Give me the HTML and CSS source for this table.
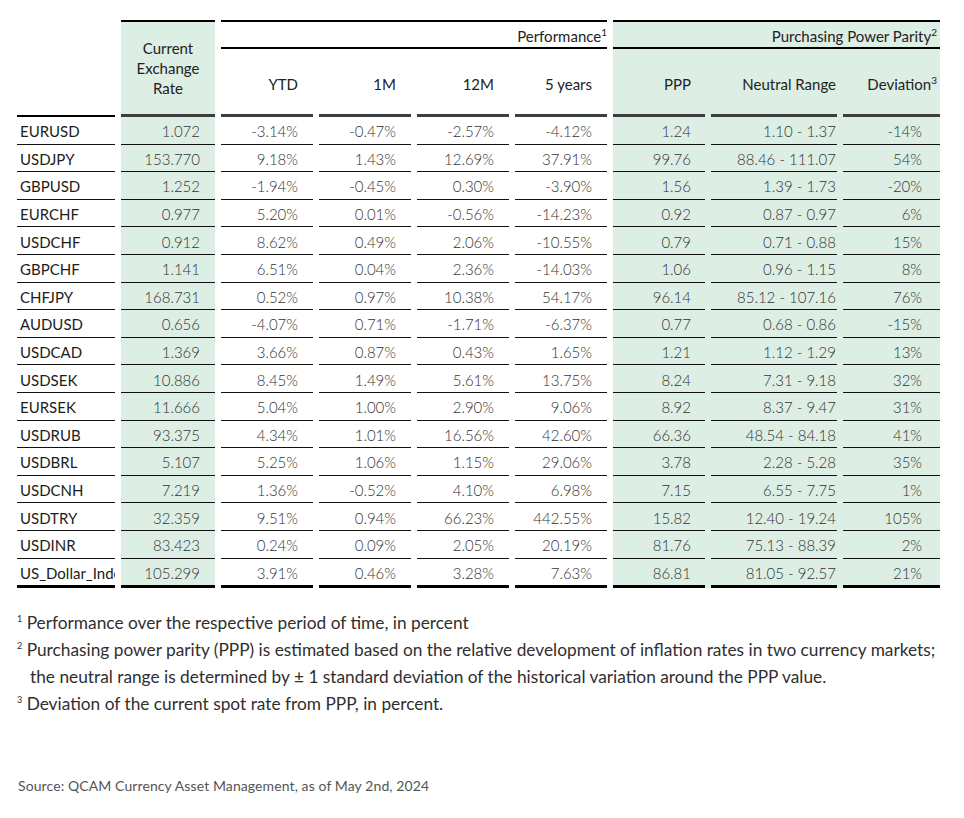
FILE: index.html
```html
<!DOCTYPE html>
<html lang="en">

<head>
    <meta charset="UTF-8">
    <meta name="viewport" content="width=device-width, initial-scale=1.0">
    <title>Currency overview</title>
    <link rel="stylesheet" href="styles.css">
</head>

<body>
    <table class="fx">
        <colgroup>
            <col style="width: 98px">
            <col style="width: 94px">
            <col style="width: 92px">
            <col style="width: 92px">
            <col style="width: 92px">
            <col style="width: 92px">
            <col style="width: 92px">
            <col style="width: 126px">
            <col style="width: 97px">
        </colgroup>
        <thead>
            <tr class="head-top">
                <th class="corner" rowspan="2"></th>
                <th class="rate-head" rowspan="2">Current Exchange Rate</th>
                <th class="grp" colspan="4">Performance<sup>1</sup></th>
                <th class="grp grp-ppp" colspan="3">Purchasing Power Parity<sup>2</sup></th>
            </tr>
            <tr class="head-cols">
                <th class="col">YTD</th>
                <th class="col">1M</th>
                <th class="col">12M</th>
                <th class="col">5 years</th>
                <th class="col ppp">PPP</th>
                <th class="col mid">Neutral Range</th>
                <th class="col dev">Deviation<sup>3</sup></th>
            </tr>
        </thead>
        <tbody>
            <tr><td>EURUSD</td><td>1.072</td><td>-3.14%</td><td>-0.47%</td><td>-2.57%</td><td>-4.12%</td><td>1.24</td><td>1.10 - 1.37</td><td>-14%</td></tr>
            <tr><td>USDJPY</td><td>153.770</td><td>9.18%</td><td>1.43%</td><td>12.69%</td><td>37.91%</td><td>99.76</td><td>88.46 - 111.07</td><td>54%</td></tr>
            <tr><td>GBPUSD</td><td>1.252</td><td>-1.94%</td><td>-0.45%</td><td>0.30%</td><td>-3.90%</td><td>1.56</td><td>1.39 - 1.73</td><td>-20%</td></tr>
            <tr><td>EURCHF</td><td>0.977</td><td>5.20%</td><td>0.01%</td><td>-0.56%</td><td>-14.23%</td><td>0.92</td><td>0.87 - 0.97</td><td>6%</td></tr>
            <tr><td>USDCHF</td><td>0.912</td><td>8.62%</td><td>0.49%</td><td>2.06%</td><td>-10.55%</td><td>0.79</td><td>0.71 - 0.88</td><td>15%</td></tr>
            <tr><td>GBPCHF</td><td>1.141</td><td>6.51%</td><td>0.04%</td><td>2.36%</td><td>-14.03%</td><td>1.06</td><td>0.96 - 1.15</td><td>8%</td></tr>
            <tr><td>CHFJPY</td><td>168.731</td><td>0.52%</td><td>0.97%</td><td>10.38%</td><td>54.17%</td><td>96.14</td><td>85.12 - 107.16</td><td>76%</td></tr>
            <tr><td>AUDUSD</td><td>0.656</td><td>-4.07%</td><td>0.71%</td><td>-1.71%</td><td>-6.37%</td><td>0.77</td><td>0.68 - 0.86</td><td>-15%</td></tr>
            <tr><td>USDCAD</td><td>1.369</td><td>3.66%</td><td>0.87%</td><td>0.43%</td><td>1.65%</td><td>1.21</td><td>1.12 - 1.29</td><td>13%</td></tr>
            <tr><td>USDSEK</td><td>10.886</td><td>8.45%</td><td>1.49%</td><td>5.61%</td><td>13.75%</td><td>8.24</td><td>7.31 - 9.18</td><td>32%</td></tr>
            <tr><td>EURSEK</td><td>11.666</td><td>5.04%</td><td>1.00%</td><td>2.90%</td><td>9.06%</td><td>8.92</td><td>8.37 - 9.47</td><td>31%</td></tr>
            <tr><td>USDRUB</td><td>93.375</td><td>4.34%</td><td>1.01%</td><td>16.56%</td><td>42.60%</td><td>66.36</td><td>48.54 - 84.18</td><td>41%</td></tr>
            <tr><td>USDBRL</td><td>5.107</td><td>5.25%</td><td>1.06%</td><td>1.15%</td><td>29.06%</td><td>3.78</td><td>2.28 - 5.28</td><td>35%</td></tr>
            <tr><td>USDCNH</td><td>7.219</td><td>1.36%</td><td>-0.52%</td><td>4.10%</td><td>6.98%</td><td>7.15</td><td>6.55 - 7.75</td><td>1%</td></tr>
            <tr><td>USDTRY</td><td>32.359</td><td>9.51%</td><td>0.94%</td><td>66.23%</td><td>442.55%</td><td>15.82</td><td>12.40 - 19.24</td><td>105%</td></tr>
            <tr><td>USDINR</td><td>83.423</td><td>0.24%</td><td>0.09%</td><td>2.05%</td><td>20.19%</td><td>81.76</td><td>75.13 - 88.39</td><td>2%</td></tr>
            <tr><td>US_Dollar_Index</td><td>105.299</td><td>3.91%</td><td>0.46%</td><td>3.28%</td><td>7.63%</td><td>86.81</td><td>81.05 - 92.57</td><td>21%</td></tr>
        </tbody>
    </table>

    <div class="notes">
        <p><sup>1</sup> Performance over the respective period of time, in percent</p>
        <p><sup>2</sup> Purchasing power parity (PPP) is estimated based on the relative development of inflation rates in two currency markets;<br>the neutral range is determined by ± 1 standard deviation of the historical variation around the PPP value.</p>
        <p><sup>3</sup> Deviation of the current spot rate from PPP, in percent.</p>
    </div>

    <p class="source">Source: QCAM Currency Asset Management, as of May 2nd, 2024</p>
</body>

</html>
```

FILE: styles.css
```css
* {
    margin: 0;
    padding: 0;
    box-sizing: border-box;
}

body {
    font-family: Lato, "Noto Sans", sans-serif;
    color: #222;
    background: #fff;
    padding: 20px 0 0 11px;
}

/* the table: 6px gaps between columns, no gaps between rows */
.fx {
    border-collapse: separate;
    border-spacing: 6px 0;
    table-layout: fixed;
    width: 935px;
    font-size: 15px;
    line-height: 20px;
}

.fx th,
.fx td {
    padding: 0;
    text-align: right;
    vertical-align: middle;
    font-weight: 400;
    white-space: nowrap;
}

.fx sup {
    font-size: 10px;
    line-height: 0;
    vertical-align: 6px;
}

/* header */
.head-top {
    height: 29px;
}

.head-cols {
    height: 68px;
}

.corner {
    border-bottom: 2px solid #000;
}

.rate-head {
    white-space: normal !important;
    text-align: center !important;
    background: #ddeee5;
    border-top: 2px solid #000;
    border-bottom: 3px solid #3b3f3d;
}

.grp {
    vertical-align: bottom !important;
    padding-bottom: 1px !important;
    border-top: 2px solid #000;
    border-bottom: 2px solid #000;
}

.grp-ppp {
    background: #ddeee5;
    padding-right: 3px !important;
}

.col {
    padding: 4px 15px 0 0 !important;
    border-bottom: 3px solid #3b3f3d;
}

.col.ppp {
    padding-right: 14px !important;
}

.col.mid {
    padding-right: 1px !important;
}

.col.dev {
    padding-right: 3px !important;
}

.ppp,
.mid,
.dev {
    background: #ddeee5;
}

/* neutral range column paints the gaps to its left and right */
.mid,
.fx tbody td:nth-child(8) {
    box-shadow: -6px 0 #ddeee5, 6px 0 #ddeee5;
}

/* body rows */
.fx tbody tr {
    height: 27.6px;
}

.fx tbody td {
    padding: 2px 15px 0 0;
    border-bottom: 1px solid #111;
    font-weight: 300;
    color: #333;
}

.fx tbody td:nth-child(1) {
    text-align: left;
    padding-left: 3px;
    padding-right: 0;
    font-weight: 400;
    color: #1c1c1c;
    overflow: hidden;
    text-overflow: clip;
}

.fx tbody td:nth-child(2) {
    background: #ddeee5;
}

.fx tbody td:nth-child(7) {
    background: #ddeee5;
    padding-right: 14px;
}

.fx tbody td:nth-child(8) {
    background: #ddeee5;
    padding-right: 1px;
}

.fx tbody td:nth-child(9) {
    background: #ddeee5;
    padding-right: 18px;
}

.fx tbody tr:last-child {
    height: 29.6px;
}

.fx tbody tr:last-child td {
    border-bottom: 3px solid #000;
}

/* footnotes */
.notes {
    margin: 21px 0 0 6px;
    font-size: 17.3px;
    line-height: 27px;
    color: #2f2f2f;
}

.notes p {
    padding-left: 13px;
    text-indent: -13px;
}

.notes sup {
    font-size: 9px;
    line-height: 0;
    vertical-align: 7px;
}

.source {
    margin: 59px 0 0 7px;
    font-size: 14px;
    line-height: 20px;
    letter-spacing: 0.1px;
    color: #555;
}
```
